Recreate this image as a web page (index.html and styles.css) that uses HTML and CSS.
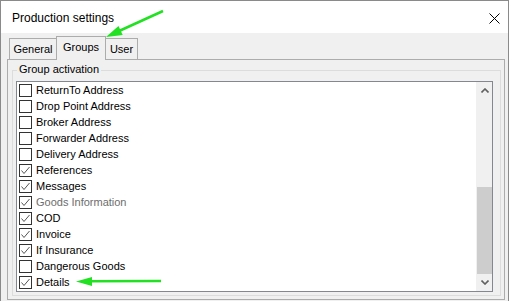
FILE: index.html
```html
<!DOCTYPE html>
<html>
<head>
<meta charset="utf-8">
<link rel="stylesheet" href="styles.css">
</head>
<body>
<div class="window">
  <div class="titlebar">
    <span class="title">Production settings</span>
    <svg class="close" width="11" height="11" viewBox="0 0 11 11"><path d="M0.5 0.5 L10.5 10.5 M10.5 0.5 L0.5 10.5" stroke="#000" stroke-width="1" fill="none"/></svg>
  </div>
  <div class="client">
    <div class="tabs">
      <div class="tab tab-general">General</div>
      <div class="tab tab-groups active">Groups</div>
      <div class="tab tab-user">User</div>
    </div>
    <div class="panel">
      <div class="group">
        <span class="legend">Group activation</span>
        <div class="listbox">
          <ul class="items">
            <li class="item"><span class="cb"></span><span>ReturnTo Address</span></li>
            <li class="item"><span class="cb"></span><span>Drop Point Address</span></li>
            <li class="item"><span class="cb"></span><span>Broker Address</span></li>
            <li class="item"><span class="cb"></span><span>Forwarder Address</span></li>
            <li class="item"><span class="cb"></span><span>Delivery Address</span></li>
            <li class="item"><span class="cb checked"><svg viewBox="0 0 11 11" width="11" height="11"><path d="M1.5 5.5 L4 8.5 L9.5 2" stroke="#555" stroke-width="1" fill="none"/></svg></span><span>References</span></li>
            <li class="item"><span class="cb checked"><svg viewBox="0 0 11 11" width="11" height="11"><path d="M1.5 5.5 L4 8.5 L9.5 2" stroke="#555" stroke-width="1" fill="none"/></svg></span><span>Messages</span></li>
            <li class="item disabled"><span class="cb checked"><svg viewBox="0 0 11 11" width="11" height="11"><path d="M1.5 5.5 L4 8.5 L9.5 2" stroke="#555" stroke-width="1" fill="none"/></svg></span><span>Goods Information</span></li>
            <li class="item"><span class="cb checked"><svg viewBox="0 0 11 11" width="11" height="11"><path d="M1.5 5.5 L4 8.5 L9.5 2" stroke="#555" stroke-width="1" fill="none"/></svg></span><span>COD</span></li>
            <li class="item"><span class="cb checked"><svg viewBox="0 0 11 11" width="11" height="11"><path d="M1.5 5.5 L4 8.5 L9.5 2" stroke="#555" stroke-width="1" fill="none"/></svg></span><span>Invoice</span></li>
            <li class="item"><span class="cb checked"><svg viewBox="0 0 11 11" width="11" height="11"><path d="M1.5 5.5 L4 8.5 L9.5 2" stroke="#555" stroke-width="1" fill="none"/></svg></span><span>If Insurance</span></li>
            <li class="item"><span class="cb"></span><span>Dangerous Goods</span></li>
            <li class="item"><span class="cb checked"><svg viewBox="0 0 11 11" width="11" height="11"><path d="M1.5 5.5 L4 8.5 L9.5 2" stroke="#555" stroke-width="1" fill="none"/></svg></span><span>Details</span></li>
          </ul>
          <div class="scrollbar">
            <div class="sb-btn"><svg width="8" height="5" viewBox="0 0 8 5"><path d="M0.5 4.5 L4 1 L7.5 4.5" stroke="#606060" stroke-width="1.6" fill="none"/></svg></div>
            <div class="sb-track"><div class="sb-thumb"></div></div>
            <div class="sb-btn"><svg width="8" height="5" viewBox="0 0 8 5"><path d="M0.5 0.5 L4 4 L7.5 0.5" stroke="#606060" stroke-width="1.6" fill="none"/></svg></div>
          </div>
        </div>
      </div>
    </div>
  </div>
  <svg class="arrows" width="512" height="301" viewBox="0 0 512 301">
    <path d="M163 11 L118 31.5" stroke="#22e022" stroke-width="2.5" fill="none"/>
    <polygon points="106,37 122.7,35 118.5,25.9" fill="#22e022"/>
    <path d="M161 281 L90 281.3" stroke="#22e022" stroke-width="2.5" fill="none"/>
    <polygon points="76,281.5 92,277 92,286" fill="#22e022"/>
  </svg>
</div>
</body>
</html>
```

FILE: styles.css
```css
html, body {
  margin: 0;
  padding: 0;
  background: #ffffff;
  overflow: hidden;
}
body {
  font-family: "Liberation Sans", Arial, sans-serif;
  font-size: 11px;
  color: #000;
}
.window {
  position: relative;
  width: 507px;
  border: 1px solid #8a8a8a;
  border-bottom: none;
}
.titlebar {
  height: 32px;
  background: #ffffff;
  display: flex;
  align-items: center;
  justify-content: space-between;
  padding: 0 8px 0 11px;
}
.title {
  font-size: 12px;
  line-height: 14px;
  margin-top: 1px;
}
.close {
  display: block;
  margin-top: 2px;
}
.client {
  background: #f0f0f0;
  padding: 3px 3px 4px 6px;
}
.tabs {
  display: flex;
  align-items: flex-end;
  margin-left: 2px;
  height: 23px;
  position: relative;
  z-index: 1;
}
.tab {
  box-sizing: border-box;
  height: 21px;
  line-height: 20px;
  text-align: center;
  border-top: 1px solid #acacac;
  background: #f0f0f0;
  font-size: 11px;
}
.tab-general {
  width: 47px;
  border-left: 1px solid #acacac;
}
.tab-groups {
  width: 50px;
  height: 24px;
  margin-bottom: -1px;
  border-left: 1px solid #acacac;
  border-right: 1px solid #acacac;
  padding-bottom: 3px;
}
.tab-user {
  width: 32px;
  border-right: 1px solid #acacac;
}
.panel {
  border: 1px solid #acacac;
  padding: 10px 3px 3px 4px;
}
.group {
  position: relative;
  border: 1px solid #dcdcdc;
  padding: 10px 7px 3px 3px;
}
.legend {
  position: absolute;
  left: 4px;
  top: -8px;
  line-height: 13px;
  padding: 0 2px;
  background: #f0f0f0;
}
.listbox {
  border: 1px solid #828790;
  background: #ffffff;
  display: flex;
  height: 209px;
}
.items {
  list-style: none;
  margin: 0;
  padding: 0;
  flex: 1;
}
.item {
  height: 16px;
  display: flex;
  align-items: center;
  gap: 4px;
  padding-left: 2px;
  line-height: 13px;
}
.item.disabled {
  color: #6d6d6d;
}
.cb {
  box-sizing: border-box;
  width: 13px;
  height: 13px;
  border: 1px solid #333333;
  background: #ffffff;
  display: flex;
  align-items: center;
  justify-content: center;
}
.cb svg {
  display: block;
}
.scrollbar {
  width: 16px;
  background: #f0f0f0;
  display: flex;
  flex-direction: column;
}
.sb-btn {
  height: 17px;
  display: flex;
  align-items: center;
  justify-content: center;
  padding-left: 1px;
}
.sb-btn svg {
  display: block;
}
.sb-track {
  flex: 1;
}
.sb-thumb {
  margin: 88px 0 0 1px;
  height: 87px;
  background: #cdcdcd;
}
.arrows {
  position: absolute;
  left: -1px;
  top: -1px;
  pointer-events: none;
}
```
